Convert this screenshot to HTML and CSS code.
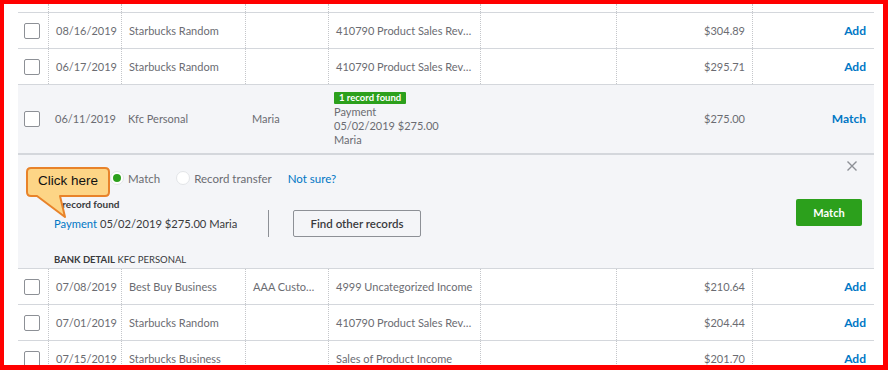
FILE: index.html
```html
<!DOCTYPE html>
<html lang="en">
<head>
    <meta charset="UTF-8">
    <title>Bank transactions</title>
    <link rel="stylesheet" href="styles.css">
</head>
<body>
    <div class="frame">
        <div class="row row-stub">
            <div class="cell"></div><div class="cell"></div><div class="cell"></div><div class="cell"></div>
            <div class="cell"></div><div class="cell"></div><div class="cell"></div><div class="cell"></div>
        </div>

        <div class="row">
            <div class="cell cell-check"><span class="box"></span></div>
            <div class="cell">08/16/2019</div>
            <div class="cell">Starbucks Random</div>
            <div class="cell cell-cut"></div>
            <div class="cell cell-cut cell-cat">410790 Product Sales Revenue</div>
            <div class="cell"></div>
            <div class="cell cell-amount">$304.89</div>
            <div class="cell cell-action">Add</div>
        </div>

        <div class="row">
            <div class="cell cell-check"><span class="box"></span></div>
            <div class="cell">06/17/2019</div>
            <div class="cell">Starbucks Random</div>
            <div class="cell cell-cut"></div>
            <div class="cell cell-cut cell-cat">410790 Product Sales Revenue</div>
            <div class="cell"></div>
            <div class="cell cell-amount">$295.71</div>
            <div class="cell cell-action">Add</div>
        </div>

        <div class="row row-open">
            <div class="cell cell-check"><span class="box"></span></div>
            <div class="cell">06/11/2019</div>
            <div class="cell">Kfc Personal</div>
            <div class="cell">Maria</div>
            <div class="cell cell-found">
                <span class="badge">1 record found</span>
                <div>Payment</div>
                <div>05/02/2019 $275.00</div>
                <div>Maria</div>
            </div>
            <div class="cell"></div>
            <div class="cell cell-amount">$275.00</div>
            <div class="cell cell-action">Match</div>
        </div>

        <div class="panel">
            <div class="panel-head">
                <div class="choices">
                    <label class="radio checked"><span class="dot"></span>Match</label>
                    <label class="radio"><span class="dot"></span>Record transfer</label>
                    <a class="link">Not sure?</a>
                </div>
                <span class="close">
                    <svg width="10" height="10" viewBox="0 0 10 10"><path d="M0.5 0.5 L9.5 9.5 M9.5 0.5 L0.5 9.5" stroke="#8d9096" stroke-width="1.4" fill="none"/></svg>
                </span>
            </div>

            <div class="panel-body">
                <div class="found">
                    <div class="found-title">1 record found</div>
                    <div class="found-line"><a class="link">Payment</a> 05/02/2019 $275.00 Maria</div>
                </div>
                <div class="divider"></div>
                <button class="btn btn-outline">Find other records</button>
                <button class="btn btn-green">Match</button>
            </div>

            <div class="bank"><b>BANK DETAIL</b> KFC PERSONAL</div>

            <!-- screenshot annotation -->
            <div class="callout">
                <svg width="90" height="56" viewBox="0 0 90 56">
                    <path d="M6 2 H80 Q84 2 84 6 V26 Q84 30 80 30 H35 L40 51 L12 30 H6 Q2 30 2 26 V6 Q2 2 6 2 Z" fill="#fdd586" stroke="#e8832a" stroke-width="2" stroke-linejoin="round"/>
                </svg>
                <span class="callout-text">Click here</span>
            </div>
        </div>

        <div class="row">
            <div class="cell cell-check"><span class="box"></span></div>
            <div class="cell">07/08/2019</div>
            <div class="cell">Best Buy Business</div>
            <div class="cell cell-cut">AAA Customer</div>
            <div class="cell cell-cut cell-cat">4999 Uncategorized Income</div>
            <div class="cell"></div>
            <div class="cell cell-amount">$210.64</div>
            <div class="cell cell-action">Add</div>
        </div>

        <div class="row">
            <div class="cell cell-check"><span class="box"></span></div>
            <div class="cell">07/01/2019</div>
            <div class="cell">Starbucks Random</div>
            <div class="cell cell-cut"></div>
            <div class="cell cell-cut cell-cat">410790 Product Sales Revenue</div>
            <div class="cell"></div>
            <div class="cell cell-amount">$204.44</div>
            <div class="cell cell-action">Add</div>
        </div>

        <div class="row">
            <div class="cell cell-check"><span class="box"></span></div>
            <div class="cell">07/15/2019</div>
            <div class="cell">Starbucks Business</div>
            <div class="cell cell-cut"></div>
            <div class="cell cell-cut cell-cat">Sales of Product Income</div>
            <div class="cell"></div>
            <div class="cell cell-amount">$201.70</div>
            <div class="cell cell-action">Add</div>
        </div>
    </div>
</body>
</html>
```

FILE: styles.css
```css
body {
    margin: 0;
    font-family: 'Lato', 'Noto Sans', sans-serif;
    color: #6b6c72;
    background: #fff;
}

.frame {
    box-sizing: border-box;
    width: 888px;
    height: 370px;
    border: 4px solid #ff0000;
    border-right-width: 5px;
    border-bottom-width: 5px;
    padding: 0 9px 0 14px;
    background: #fff;
    overflow: hidden;
}

.row {
    display: grid;
    grid-template-columns: 30px 73px 124px 83px 152px 136px 136px 122px;
    box-sizing: border-box;
    height: 36px;
    border-bottom: 1px solid #d4d7dc;
    font-size: 11px;
}

.row-stub {
    height: 9px;
}

.cell {
    box-sizing: border-box;
    border-left: 1px dotted #c4c6ca;
    padding: 0 7px;
    line-height: 35px;
    white-space: nowrap;
}

.cell-cut {
    overflow: hidden;
    text-overflow: ellipsis;
}

.cell:first-child {
    border-left: none;
}

.cell-check {
    padding: 0 0 0 6px;
    display: flex;
    align-items: center;
}

.box {
    display: block;
    box-sizing: border-box;
    width: 16px;
    height: 16px;
    border: 1px solid #8d9096;
    border-radius: 2px;
    background: #fff;
}

.cell-cat {
    padding-right: 4px;
}

.cell-amount {
    text-align: right;
}

.cell-action {
    text-align: right;
    padding-right: 8px;
    font-weight: bold;
    font-size: 12px;
    color: #0077c5;
}

/* selected row */
.row-open {
    height: 70px;
    border-bottom: 2px solid #d4d7dc;
    background: #f4f5f8;
}

.row-open .cell {
    border-left: none;
    line-height: 68px;
}

.row-open .cell-found {
    line-height: 14px;
    padding: 7px 7px 0 6px;
}

.badge {
    display: block;
    width: max-content;
    background: #2ca01c;
    color: #fff;
    font-size: 9.5px;
    font-weight: bold;
    line-height: 12px;
    padding: 0 5px;
    border-radius: 1px;
    margin-bottom: 1px;
}

/* expanded match panel */
.panel {
    position: relative;
    box-sizing: border-box;
    height: 114px;
    padding: 6px 12px 0 36px;
    background: #f4f5f8;
    border-bottom: 1px solid #d4d7dc;
    color: #393a3d;
    font-size: 11px;
}

.panel-head {
    display: flex;
    justify-content: space-between;
    align-items: flex-start;
}

.choices {
    display: flex;
    align-items: center;
    margin: 10px 0 0 56px;
    height: 14px;
    color: #6b6c72;
    font-size: 11.5px;
}

.radio {
    display: flex;
    align-items: center;
    gap: 4px;
    margin-right: 16px;
}

.dot {
    box-sizing: border-box;
    width: 14px;
    height: 14px;
    border-radius: 50%;
    border: 1px solid #e3e5e8;
    background: #fff;
    display: flex;
    align-items: center;
    justify-content: center;
}

.checked .dot::after {
    content: "";
    width: 8px;
    height: 8px;
    border-radius: 50%;
    background: #2ca01c;
}

.link {
    color: #0077c5;
}

.close {
    display: block;
    width: 10px;
    height: 10px;
    margin-right: 5px;
}

.close svg {
    display: block;
}

.panel-body {
    display: flex;
    align-items: flex-start;
    margin-top: 13px;
}

.found {
    width: 214px;
    flex: none;
}

.found-title {
    font-size: 10px;
    font-weight: bold;
    line-height: 12px;
}

.found-line {
    margin-top: 6px;
    line-height: 16px;
    white-space: nowrap;
    font-size: 11.2px;
}

.divider {
    width: 1px;
    height: 27px;
    margin-top: 12px;
    background: #8d9096;
}

.btn {
    font-family: inherit;
    box-sizing: border-box;
    height: 27px;
    border-radius: 2px;
    cursor: pointer;
}

.btn-outline {
    margin: 12px 0 0 24px;
    width: 128px;
    border: 1px solid #8d9096;
    background: #fff0;
    color: #393a3d;
    font-size: 11.5px;
    font-weight: 600;
}

.btn-green {
    margin: 1px 0 0 auto;
    width: 66px;
    border: none;
    background: #2ca01c;
    color: #fff;
    font-size: 11px;
    font-weight: bold;
}

.bank {
    margin-top: 17px;
    line-height: 12px;
    font-size: 9.5px;
    color: #393a3d;
}

.callout {
    position: absolute;
    left: 7px;
    top: 11px;
    width: 90px;
    height: 56px;
}

.callout svg {
    display: block;
}

.callout-text {
    position: absolute;
    left: 13px;
    top: 7px;
    font-family: 'Liberation Sans', Arial, sans-serif;
    font-size: 13.5px;
    color: #111;
}
```
